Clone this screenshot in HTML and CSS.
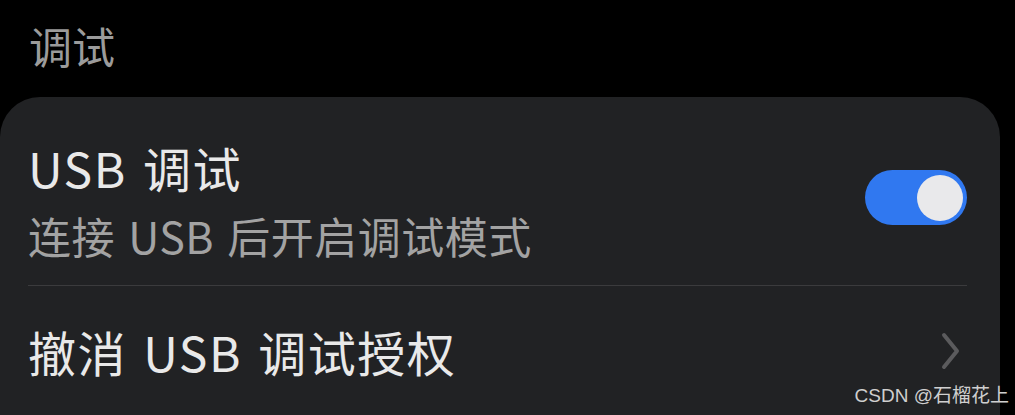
FILE: index.html
```html
<!DOCTYPE html>
<html lang="zh-CN">
<head>
<meta charset="utf-8">
<link rel="stylesheet" href="styles.css">
</head>
<body>
<div class="page">
  <div class="section-title">调试</div>
  <div class="card">
    <div class="row row-toggle">
      <div class="texts">
        <div class="row-title">USB 调试</div>
        <div class="row-sub">连接 USB 后开启调试模式</div>
      </div>
      <div class="toggle"><div class="knob"></div></div>
    </div>
    <div class="divider"></div>
    <div class="row row-link">
      <div class="row-title">撤消 USB 调试授权</div>
      <svg class="chevron" width="22" height="40" viewBox="0 0 22 40"><path d="M4 4 L17 20 L4 36" fill="none" stroke="#5b5b5d" stroke-width="4" stroke-linecap="round" stroke-linejoin="round"/></svg>
    </div>
  </div>
  <div class="watermark">CSDN @石榴花上</div>
</div>
</body>
</html>
```

FILE: styles.css
```css
html, body {
  margin: 0;
  padding: 0;
  background: #000;
  width: 1015px;
  height: 415px;
  overflow: hidden;
}
.page {
  position: relative;
  width: 1015px;
  height: 415px;
  font-family: "Noto Sans CJK SC", "Noto Sans", sans-serif;
}
.section-title {
  box-sizing: border-box;
  height: 97px;
  padding: 20px 0 0 29px;
  font-size: 43px;
  line-height: 50px;
  color: #9b9b9b;
}
.card {
  width: 1000px;
  height: 318px;
  box-sizing: border-box;
  background: #212224;
  border-radius: 40px 40px 0 0;
  padding: 0 33px 0 28px;
}
.row {
  display: flex;
  align-items: center;
  justify-content: space-between;
}
.row-toggle {
  padding: 41px 0 25px 0;
  align-items: flex-start;
}
.row-title {
  font-size: 48px;
  line-height: 58px;
  color: #e9e9e9;
  letter-spacing: 1.5px;
  word-spacing: 4px;
}
.row-sub {
  margin-top: 14px;
  font-size: 43px;
  line-height: 50px;
  color: #a3a3a3;
  letter-spacing: 0.5px;
  word-spacing: 3px;
}
.toggle {
  width: 102px;
  height: 55px;
  margin-top: 32px;
  border-radius: 28px;
  background: #3078f0;
  display: flex;
  align-items: center;
  justify-content: flex-end;
  padding-right: 4px;
  box-sizing: border-box;
}
.knob {
  width: 46px;
  height: 46px;
  border-radius: 50%;
  background: #e9e9eb;
}
.divider {
  height: 1px;
  background: #3b3b3d;
}
.row-link {
  padding-top: 36px;
}
.chevron {
  margin-right: 5px;
  margin-top: 0;
}
.watermark {
  position: absolute;
  right: 6px;
  bottom: 8px;
  font-family: "Liberation Sans", "Noto Sans CJK SC", sans-serif;
  font-size: 19px;
  line-height: 22px;
  color: #cfcfcf;
}
```
